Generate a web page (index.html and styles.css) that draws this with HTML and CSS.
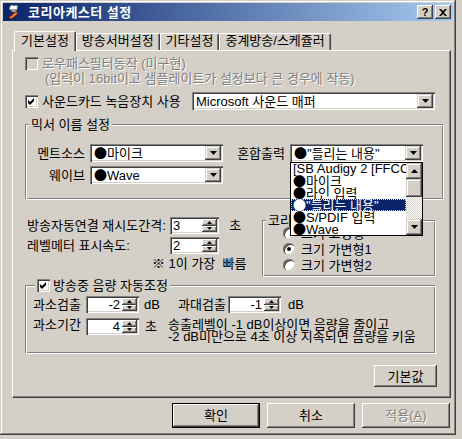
FILE: index.html
```html
<!DOCTYPE html>
<html>
  <head>
    <meta charset="utf-8">
    <title>코리아케스터 설정</title>
    <link rel="stylesheet" href="styles.css">
  </head>
  <body>
    <div class="window">
      <!-- title bar -->
      <div class="titlebar">
        <svg class="app-icon" width="16" height="16" viewBox="0 0 16 16">
          <path d="M4 3c0-2 3-3 4-1c2-2 5 0 3 2c1 1 0 2-2 2h-4c-2 0-2-2-1-3z" fill="#fff" stroke="#6a6a6a" stroke-width="0.8"/>
          <path d="M5 6h6l-1 2h-4z" fill="#b8b8b8" stroke="#5a5a5a" stroke-width="0.6"/>
          <path d="M10 8l2 1.5l-7 5.5l-2-1.5z" fill="#f28a1e" stroke="#a82400" stroke-width="0.8"/>
          <path d="M3 13.5l2 1.5l-3 1z" fill="#3a1a00"/>
        </svg>
        <span class="title">코리아케스터 설정</span>
        <div class="title-buttons">
          <span class="tbtn">?</span>
          <span class="tbtn">
            <svg width="8" height="7" viewBox="0 0 8 7"><path d="M0 0h2l2 2l2-2h2l-3 3.5l3 3.5h-2l-2-2l-2 2h-2l3-3.5z" fill="#000"/></svg>
          </span>
        </div>
      </div>

      <div class="tabs">
        <div class="tab-strip">
          <div class="tab active">기본설정</div>
          <div class="tab">방송서버설정</div>
          <div class="tab">기타설정</div>
          <div class="tab">중계방송/스케쥴러</div>
        </div>

        <div class="panel">
          <div class="check-row lowpass disabled">
            <span class="checkbox off"></span>
            <span>로우패스필터동작 (미구현)</span>
          </div>
          <div class="note disabled">(입력이 16bit이고 샘플레이트가 설정보다 큰 경우에 작동)</div>

          <div class="check-row sound-row">
            <span class="checkbox">
              <svg width="7" height="7" viewBox="0 0 7 7"><path d="M0 2l2 2l4-4v3l-4 4l-2-2z" fill="#000"/></svg>
            </span>
            <span>사운드카드 녹음장치 사용</span>
            <div class="combo combo-wide">
              <span class="combo-text">Microsoft 사운드 매퍼</span>
              <span class="combo-btn"><svg width="7" height="4" viewBox="0 0 7 4"><path d="M0 0h7l-3.5 4z" fill="#000"/></svg></span>
            </div>
          </div>

          <div class="group mixer">
            <span class="group-title">믹서 이름 설정</span>
            <div class="mixer-grid">
              <span class="lbl">멘트소스</span>
              <div class="combo">
                <span class="combo-text"><span class="dot">●</span>마이크</span>
                <span class="combo-btn"><svg width="7" height="4" viewBox="0 0 7 4"><path d="M0 0h7l-3.5 4z" fill="#000"/></svg></span>
              </div>
              <span class="lbl">혼합출력</span>
              <div class="combo">
                <span class="combo-text"><span class="dot">●</span>"들리는 내용"</span>
                <span class="combo-btn"><svg width="7" height="4" viewBox="0 0 7 4"><path d="M0 0h7l-3.5 4z" fill="#000"/></svg></span>

                <!-- open drop-down list -->
                <div class="dropdown">
                  <div class="items">
                    <div class="item">[SB Audigy 2 [FFCC]</div>
                    <div class="item"><span class="dot">●</span>마이크</div>
                    <div class="item"><span class="dot">●</span>라인 입력</div>
                    <div class="item selected"><span class="dot">●</span>"들리는 내용"</div>
                    <div class="item"><span class="dot">●</span>S/PDIF 입력</div>
                    <div class="item"><span class="dot">●</span>Wave</div>
                  </div>
                  <div class="scrollbar">
                    <span class="sb-btn"><svg width="7" height="4" viewBox="0 0 7 4"><path d="M0 4h7l-3.5-4z" fill="#000"/></svg></span>
                    <span class="sb-thumb"></span>
                    <span class="sb-track"></span>
                    <span class="sb-btn"><svg width="7" height="4" viewBox="0 0 7 4"><path d="M0 0h7l-3.5 4z" fill="#000"/></svg></span>
                  </div>
                </div>
              </div>
              <span class="lbl">웨이브</span>
              <div class="combo">
                <span class="combo-text"><span class="dot">●</span>Wave</span>
                <span class="combo-btn"><svg width="7" height="4" viewBox="0 0 7 4"><path d="M0 0h7l-3.5 4z" fill="#000"/></svg></span>
              </div>
            </div>
          </div>

          <div class="mid">
            <div class="left-col">
              <div class="spin-rows">
                <span>방송자동연결 재시도간격:</span>
                <div class="spin spin-small">
                  <span class="spin-val">3</span>
                  <span class="spin-btns">
                    <span class="spin-btn"><svg width="5" height="3" viewBox="0 0 5 3"><path d="M0 3h5l-2.5-3z" fill="#000"/></svg></span>
                    <span class="spin-btn"><svg width="5" height="3" viewBox="0 0 5 3"><path d="M0 0h5l-2.5 3z" fill="#000"/></svg></span>
                  </span>
                </div>
                <span class="unit">초</span>
                <span>레벨메터 표시속도:</span>
                <div class="spin spin-small">
                  <span class="spin-val">2</span>
                  <span class="spin-btns">
                    <span class="spin-btn"><svg width="5" height="3" viewBox="0 0 5 3"><path d="M0 3h5l-2.5-3z" fill="#000"/></svg></span>
                    <span class="spin-btn"><svg width="5" height="3" viewBox="0 0 5 3"><path d="M0 0h5l-2.5 3z" fill="#000"/></svg></span>
                  </span>
                </div>
                <span></span>
              </div>
              <div class="speed-note">※ 1이 가장&nbsp; 빠름</div>
            </div>

            <div class="group size-group">
              <span class="group-title">코리아케스터 창 크기</span>
              <div class="radio-row"><span class="radio"></span><span>크기 고정형</span></div>
              <div class="radio-row"><span class="radio on"></span><span>크기 가변형1</span></div>
              <div class="radio-row"><span class="radio"></span><span>크기 가변형2</span></div>
            </div>
          </div>

          <div class="group vol-group">
            <span class="group-title check-title">
              <span class="checkbox">
                <svg width="7" height="7" viewBox="0 0 7 7"><path d="M0 2l2 2l4-4v3l-4 4l-2-2z" fill="#000"/></svg>
              </span>
              <span>방송중 음량 자동조정</span>
            </span>
            <div class="vol-row">
              <span class="lbl4">과소검출</span>
              <div class="spin spin-vol">
                <span class="spin-val right">-2</span>
                <span class="spin-btns">
                  <span class="spin-btn"><svg width="5" height="3" viewBox="0 0 5 3"><path d="M0 3h5l-2.5-3z" fill="#000"/></svg></span>
                  <span class="spin-btn"><svg width="5" height="3" viewBox="0 0 5 3"><path d="M0 0h5l-2.5 3z" fill="#000"/></svg></span>
                </span>
              </div>
              <span class="db">dB</span>
              <span class="lbl4 wide">과대검출</span>
              <div class="spin spin-vol">
                <span class="spin-val right">-1</span>
                <span class="spin-btns">
                  <span class="spin-btn"><svg width="5" height="3" viewBox="0 0 5 3"><path d="M0 3h5l-2.5-3z" fill="#000"/></svg></span>
                  <span class="spin-btn"><svg width="5" height="3" viewBox="0 0 5 3"><path d="M0 0h5l-2.5 3z" fill="#000"/></svg></span>
                </span>
              </div>
              <span class="db2">dB</span>
            </div>
            <div class="vol-row second">
              <span class="lbl4">과소기간</span>
              <div class="spin spin-vol">
                <span class="spin-val right">4</span>
                <span class="spin-btns">
                  <span class="spin-btn"><svg width="5" height="3" viewBox="0 0 5 3"><path d="M0 3h5l-2.5-3z" fill="#000"/></svg></span>
                  <span class="spin-btn"><svg width="5" height="3" viewBox="0 0 5 3"><path d="M0 0h5l-2.5 3z" fill="#000"/></svg></span>
                </span>
              </div>
              <span class="sec">초</span>
              <div class="vol-desc">
                송출레벨이 -1 dB이상이면 음량을 줄이고<br>
                -2 dB미만으로 4초 이상 지속되면 음량을 키움
              </div>
            </div>
          </div>

          <div class="btn default-btn-small">기본값</div>
        </div>
      </div>

      <div class="dialog-buttons">
        <div class="btn big default">확인</div>
        <div class="btn big">취소</div>
        <div class="btn big disabled">적용(<u>A</u>)</div>
      </div>
    </div>
  </body>
</html>
```

FILE: styles.css
```css
* {
  box-sizing: border-box;
}

body {
  margin: 0;
  background: #d4d0c8;
  font-family: "Liberation Sans", "Noto Sans CJK KR", sans-serif;
  font-size: 13px;
  line-height: 13px;
  color: #000;
}

.window {
  width: 456px;
  height: 435px;
  padding: 3px;
  background: #d4d0c8;
  box-shadow: inset -1px -1px #404040, inset 1px 1px #d4d0c8, inset -2px -2px #808080, inset 2px 2px #fff;
}

/* ---------- title bar ---------- */
.titlebar {
  height: 18px;
  display: flex;
  align-items: center;
  background: linear-gradient(to right, #0a246a, #a6caf0);
  color: #fff;
}

.app-icon {
  flex: none;
  margin: 0 6px 0 3px;
}

.title {
  font-weight: bold;
  letter-spacing: 0.5px;
}

.title-buttons {
  margin-left: auto;
  margin-right: 2px;
  display: flex;
  gap: 2px;
}

.tbtn {
  width: 16px;
  height: 14px;
  display: flex;
  align-items: center;
  justify-content: center;
  background: #d4d0c8;
  color: #000;
  font-weight: bold;
  font-size: 11px;
  box-shadow: inset -1px -1px #404040, inset 1px 1px #fff, inset -2px -2px #808080, inset 2px 2px #d4d0c8;
}

/* ---------- tabs ---------- */
.tabs {
  margin: 10px 0 0 9px;
  width: 439px;
}

.tab-strip {
  height: 19px;
  display: flex;
  align-items: flex-end;
  padding-left: 2px;
}

.tab {
  height: 17px;
  padding: 0 5px;
  white-space: nowrap;
  border: 1px solid;
  border-bottom: 0;
  border-color: #fff #404040 transparent #fff;
  border-radius: 2px 2px 0 0;
  box-shadow: inset -1px 0 #808080;
}

.tab.active {
  position: relative;
  z-index: 1;
  height: 20px;
  margin-bottom: -1px;
  padding: 2px 6px 0;
  background: #d4d0c8;
}

.panel {
  height: 348px;
  border: 1px solid;
  border-color: #fff #404040 #404040 #fff;
  box-shadow: inset -1px -1px #808080;
}

/* ---------- common controls ---------- */
.disabled {
  color: #808080;
  text-shadow: 1px 1px #fff;
}

.check-row {
  display: flex;
  align-items: center;
  gap: 4px;
}

.checkbox {
  flex: none;
  width: 13px;
  height: 13px;
  display: flex;
  align-items: center;
  justify-content: center;
  background: #fff;
  box-shadow: inset 1px 1px #808080, inset 2px 2px #404040, inset -1px -1px #fff, inset -2px -2px #d4d0c8;
}

.checkbox.off {
  background: #d4d0c8;
}

.combo {
  position: relative;
  height: 18px;
  padding: 2px;
  display: flex;
  align-items: center;
  background: #fff;
  box-shadow: inset 1px 1px #808080, inset 2px 2px #404040, inset -1px -1px #fff, inset -2px -2px #d4d0c8;
}

.combo-text {
  flex: 1;
  padding-left: 2px;
  white-space: nowrap;
  overflow: hidden;
}

.combo-btn {
  flex: none;
  width: 16px;
  height: 14px;
  display: flex;
  align-items: center;
  justify-content: center;
  background: #d4d0c8;
  box-shadow: inset -1px -1px #404040, inset 1px 1px #d4d0c8, inset -2px -2px #808080, inset 2px 2px #fff;
}

.dot {
  font-family: "Noto Sans CJK KR", sans-serif;
}

.spin {
  height: 17px;
  padding: 2px;
  display: flex;
  background: #fff;
  box-shadow: inset 1px 1px #808080, inset 2px 2px #404040, inset -1px -1px #fff, inset -2px -2px #d4d0c8;
}

.spin-val {
  flex: 1;
  padding-left: 1px;
  line-height: 13px;
}

.spin-val.right {
  text-align: right;
  padding-right: 2px;
}

.spin-btns {
  flex: none;
  width: 15px;
  display: flex;
  flex-direction: column;
}

.spin-btn {
  flex: 1;
  display: flex;
  align-items: center;
  justify-content: center;
  background: #d4d0c8;
  box-shadow: inset -1px -1px #404040, inset 1px 1px #fff, inset -2px -2px #808080;
}

.group {
  position: relative;
  border: 1px solid;
  border-color: #808080 #fff #fff #808080;
  box-shadow: inset 1px 1px #fff, inset -1px -1px #808080;
}

.group-title {
  position: absolute;
  top: -7px;
  left: 3px;
  padding: 0 2px;
  background: #d4d0c8;
  white-space: nowrap;
}

.btn {
  display: flex;
  align-items: center;
  justify-content: center;
  background: #d4d0c8;
  box-shadow: inset -1px -1px #404040, inset 1px 1px #fff, inset -2px -2px #808080, inset 2px 2px #d4d0c8;
}

/* ---------- panel content ---------- */
.lowpass {
  margin: 6px 0 0 12px;
}

.note {
  margin: 2px 0 0 32px;
}

.sound-row {
  margin: 7px 15px 0 12px;
}

.combo-wide {
  margin-left: auto;
  width: 243px;
}

.mixer {
  margin: 14px 6px 0 12px;
  height: 76px;
}

.mixer-grid {
  padding-top: 19px;
  display: grid;
  grid-template-columns: 59px 133px 57px 133px;
  column-gap: 5px;
  row-gap: 4px;
  align-items: center;
}

.lbl {
  text-align: right;
  white-space: nowrap;
}

.dropdown {
  position: absolute;
  top: 100%;
  left: 0;
  z-index: 5;
  width: 133px;
  height: 74px;
  display: flex;
  background: #fff;
  border: 1px solid #000;
}

.items {
  flex: 1;
  overflow: hidden;
}

.item {
  height: 12px;
  line-height: 12px;
  padding-left: 2px;
  white-space: nowrap;
}

.item.selected {
  background: #0a246a;
  color: #fff;
  outline: 1px dotted #e8d890;
  outline-offset: -1px;
}

.scrollbar {
  flex: none;
  width: 16px;
  display: flex;
  flex-direction: column;
}

.sb-btn {
  height: 16px;
  display: flex;
  align-items: center;
  justify-content: center;
  background: #d4d0c8;
  box-shadow: inset -1px -1px #404040, inset 1px 1px #d4d0c8, inset -2px -2px #808080, inset 2px 2px #fff;
}

.sb-thumb {
  height: 18px;
  background: #d4d0c8;
  box-shadow: inset -1px -1px #404040, inset 1px 1px #d4d0c8, inset -2px -2px #808080, inset 2px 2px #fff;
}

.sb-track {
  flex: 1;
  background-image: conic-gradient(#d4d0c8 25%, #fff 0 50%, #d4d0c8 0 75%, #fff 0);
  background-size: 2px 2px;
}

.mid {
  margin: 17px 14px 0 14px;
  display: flex;
  justify-content: space-between;
  align-items: flex-start;
}

.spin-rows {
  display: grid;
  grid-template-columns: 143px auto auto;
  row-gap: 3px;
  align-items: center;
}

.spin-rows > span {
  white-space: nowrap;
}

.spin-small {
  width: 49px;
}

.unit {
  margin-left: 5px;
}

.speed-note {
  margin: 3px 0 0 125px;
  white-space: nowrap;
}

.size-group {
  margin-top: 3px;
  width: 174px;
  height: 57px;
  padding: 4px 0 0 20px;
}

.radio-row {
  height: 16px;
  display: flex;
  align-items: center;
  gap: 6px;
}

.radio {
  width: 12px;
  height: 12px;
  border-radius: 50%;
  display: flex;
  align-items: center;
  justify-content: center;
  background: #fff;
  box-shadow: inset 1px 1px #808080, inset 2px 2px #404040, inset -1px -1px #d4d0c8;
}

.radio.on::after {
  content: "";
  width: 4px;
  height: 4px;
  border-radius: 50%;
  background: #000;
}

.vol-group {
  margin: 8px 14px 0 12px;
  height: 69px;
  padding: 10px 0 0 7px;
}

.check-title {
  left: 9px;
  display: flex;
  align-items: center;
  gap: 3px;
}

.vol-row {
  display: flex;
  align-items: center;
}

.vol-row.second {
  margin-top: 5px;
  align-items: flex-start;
}

.lbl4 {
  width: 48px;
  margin-right: 5px;
  white-space: nowrap;
}

.lbl4.wide {
  width: 50px;
  margin-right: 0;
}

.spin-vol {
  width: 53px;
}

.db {
  width: 34px;
  margin-left: 5px;
}

.db2 {
  margin-left: 7px;
}

.sec {
  margin: 2px 0 0 6px;
}

.vol-desc {
  margin: 1px 0 0 11px;
  line-height: 12px;
  white-space: nowrap;
}

.default-btn-small {
  width: 63px;
  height: 22px;
  margin: 11px 13px 0 auto;
}

/* ---------- dialog buttons ---------- */
.dialog-buttons {
  margin: 5px 0 0 169px;
  display: flex;
  gap: 7px;
}

.btn.big {
  width: 88px;
  height: 25px;
}

.btn.default {
  border: 1px solid #000;
}

.btn.disabled {
  color: #808080;
  text-shadow: 1px 1px #fff;
}
```
